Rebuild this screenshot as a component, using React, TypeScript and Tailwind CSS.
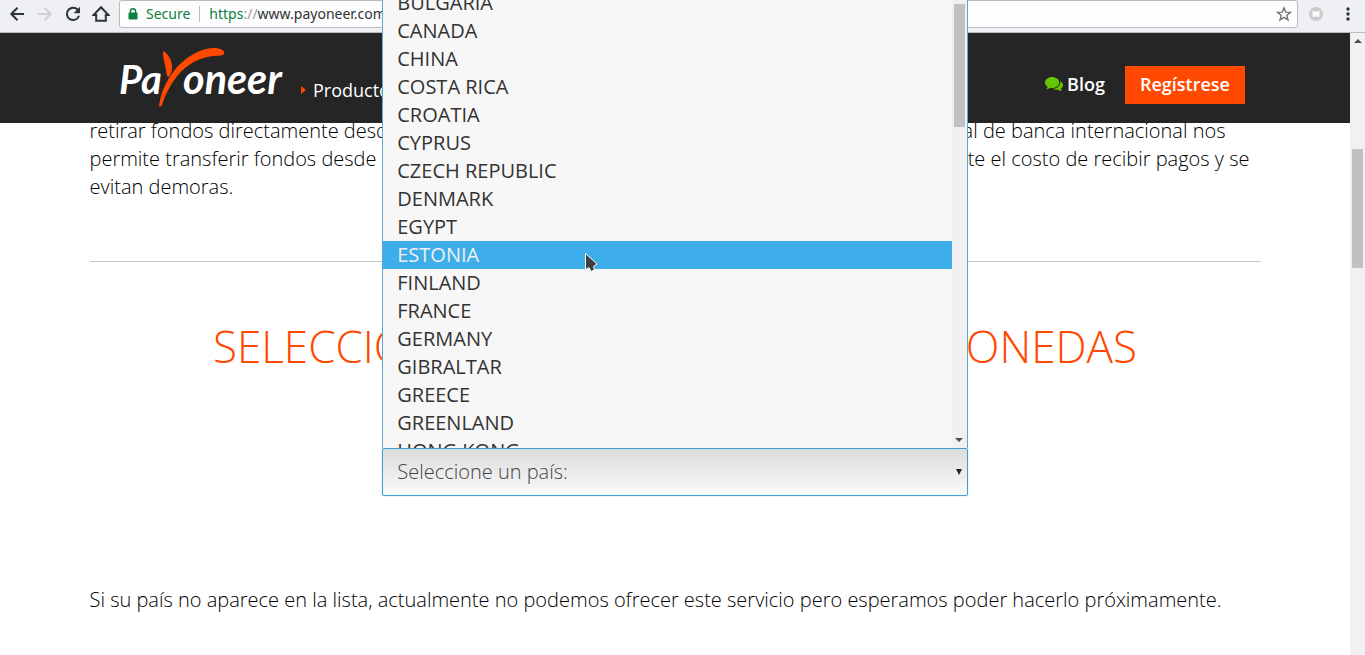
import type { ReactNode } from 'react';

const countries = [
  'BULGARIA', 'CANADA', 'CHINA', 'COSTA RICA', 'CROATIA', 'CYPRUS', 'CZECH REPUBLIC', 'DENMARK', 'EGYPT',
  'ESTONIA', 'FINLAND', 'FRANCE', 'GERMANY', 'GIBRALTAR', 'GREECE', 'GREENLAND', 'HONG KONG',
];

function ToolButton({ label, children }: { label: string; children: ReactNode }) {
  return (
    <button type="button" aria-label={label} className="flex h-7 w-7 items-center justify-center">
      {children}
    </button>
  );
}

function Toolbar() {
  return (
    <div className="flex h-[33px] items-start border-b border-[#b9bbbf] bg-[#eef0f3] pl-[3px] font-['Noto_Sans',sans-serif] text-sm">
      <div className="flex">
        <ToolButton label="Back">
          <svg width="16" height="16" viewBox="0 0 16 16" fill="none" stroke="#2e3338" strokeWidth="2">
            <path d="M15 8H2.5M8.5 1.8 2.3 8l6.2 6.2" />
          </svg>
        </ToolButton>
        <ToolButton label="Forward">
          <svg width="16" height="16" viewBox="0 0 16 16" fill="none" stroke="#cfd0d2" strokeWidth="2">
            <path d="M1 8h12.5M7.5 1.8 13.7 8l-6.2 6.2" />
          </svg>
        </ToolButton>
        <ToolButton label="Reload">
          <svg width="16" height="16" viewBox="0 0 16 16" fill="none" stroke="#2e3338" strokeWidth="2">
            <path d="M13.4 4.6A6.2 6.2 0 1 0 14 9.8" />
            <path d="M15 .8v6.4H8.6z" fill="#2e3338" stroke="none" />
          </svg>
        </ToolButton>
        <ToolButton label="Home">
          <svg width="18" height="18" viewBox="0 0 18 18" fill="none" stroke="#2e3338" strokeWidth="2">
            <path d="M1.600 10 9 2.300l7.400 7.700h-2.600v5.800H4.200V10z" />
          </svg>
        </ToolButton>
      </div>
      <div className="ml-1 flex h-7 flex-1 items-center rounded-[3px] border border-[#b9bbbf] bg-[#fdfdfd] pr-[5px] pl-2">
        <svg width="10" height="12" viewBox="0 0 10 12" className="mr-2">
          <path d="M2.4 5V3.4a2.6 2.6 0 0 1 5.2 0V5" fill="none" stroke="#0b8043" strokeWidth="1.4" />
          <rect x="0.5" y="4.6" width="9" height="6.8" rx="1" fill="#0b8043" />
        </svg>
        <span className="text-[#0b8043]">Secure</span>
        <span className="mx-[9px] h-4 w-px bg-[#bdbdbd]" />
        <div role="textbox" aria-label="Address" className="flex-1 text-[#2e3338]">
          <span className="text-[#0b8043]">https</span>
          <span className="text-[#9a9a9a]">://</span>www.payoneer.com
        </div>
        <button type="button" aria-label="Bookmark this page">
          <svg width="16" height="16" viewBox="0 0 16 16" fill="none" stroke="#70757a" strokeWidth="1.4">
            <path d="m8 1.8 1.7 4.3 4.7.3-3.6 3 1.2 4.5L8 11.4l-4 2.5 1.2-4.5-3.6-3 4.7-.3z" />
          </svg>
        </button>
      </div>
      <button type="button" aria-label="Extension" className="mx-[11px] flex h-7 items-center">
        <svg width="14" height="14" viewBox="0 0 14 14">
          <circle cx="7" cy="7" r="7" fill="#cbcbcb" />
          <path d="M3.500 3.800 5.500 4 7 5l1.500-1 2-.2V10.200l-2-.2L7 9.200l-1.500.8-2 .2z" fill="#fafafa" />
        </svg>
      </button>
      <button type="button" aria-label="Menu" className="mr-[3px] flex h-7 w-7 items-center justify-center">
        <svg width="4" height="14" viewBox="0 0 4 14" fill="#2e3338">
          <circle cx="2" cy="2" r="1.7" />
          <circle cx="2" cy="7" r="1.7" />
          <circle cx="2" cy="12" r="1.7" />
        </svg>
      </button>
    </div>
  );
}

function Logo() {
  return (
    <svg width="164" height="60" viewBox="90 54 492 180" role="img" aria-label="Payoneer">
      <g fill="#fff" fontFamily="Lato, sans-serif" fontStyle="italic" fontWeight="700">
        <text x="87" y="192" fontSize="120">Pa</text>
        <text x="279" y="192" fontSize="124">oneer</text>
      </g>
      <g fill="#ff4800">
        <path d="M219 62c14 8 25 25 27 44 1 14-2 26-9 34-5 1-6-2-7-8-2-24-12-44-11-70z" />
        <path d="M207 229c4-33 17-68 40-100 33-45 82-75 124-75 19 0 32 7 32 14 0 6-7 9-17 9-38-1-79 15-111 46-27 27-47 66-58 98-3 9-8 11-10 8z" />
      </g>
    </svg>
  );
}

function Header() {
  return (
    <header className="relative z-10 h-[90px] bg-[#252525] px-[105px] font-['Open_Sans',sans-serif] text-white">
      <div className="flex h-full items-start justify-between pl-[15px]">
        <div className="flex pt-[15px]">
          <a href="#inicio">
            <Logo />
          </a>
          <a href="#productos" className="mt-7 ml-[17px] flex h-7 items-center gap-[7px] text-lg">
            <svg width="5" height="8" viewBox="0 0 5 8" fill="#ff4800">
              <path d="M0 0l5 4-5 4z" />
            </svg>
            Productos
          </a>
        </div>
        <div className="flex items-start gap-5 pt-[33px] text-lg leading-9 font-semibold">
          <a href="#blog" className="flex items-center gap-1">
            <svg width="18" height="15" viewBox="0 0 18 15" fill="#66c400">
              <path d="M7.2 0C11.2 0 14.3 2.5 14.3 5.5S11.2 11 7.2 11c-.7 0-1.400-.1-2-.2-1 .8-2.300 1.300-3.900 1.400.7-.7 1.200-1.500 1.300-2.400C1 8.800 0 7.300 0 5.500 0 2.500 3.200 0 7.200 0z" />
              <path d="M15.300 4.200c1.600.9 2.700 2.300 2.700 4 0 1.500-.9 2.900-2.300 3.800.2.800.7 1.500 1.400 2.100-1.600-.1-2.900-.6-3.900-1.400-1.900.4-4.100 0-5.600-.9 4.500 0 8.200-3.400 7.700-7.600z" />
            </svg>
            Blog
          </a>
          <a href="#registro" className="h-[38px] bg-[#ff4800] px-[15px]">
            Regístrese
          </a>
        </div>
      </div>
    </header>
  );
}

function CountryPicker() {
  return (
    <div className="relative z-20 mx-auto mt-[72px] w-1/2">
      <div className="absolute bottom-full left-0 flex h-[459px] w-full overflow-hidden border-x border-[#5ba8d3] bg-[#f7f7f7] text-xl font-normal text-[#333]">
        <ul role="listbox" aria-label="Países" className="flex-1">
          {countries.map((name) => (
            <li
              key={name}
              role="option"
              aria-selected={name === 'ESTONIA'}
              className={name === 'ESTONIA' ? 'bg-[#3daee9] px-[14px] leading-7 text-[#eff0f1]' : 'px-[14px] leading-7'}
            >
              {name}
            </li>
          ))}
        </ul>
        <div className="flex w-[15px] flex-col items-center justify-between bg-[#f0f0f0] pt-[15px] pb-[6px]">
          <div className="h-[123px] w-[11px] bg-[#c1c1c1]" />
          <svg width="8" height="4" viewBox="0 0 8 4" fill="#505050">
            <path d="M0 0h8L4 4z" />
          </svg>
        </div>
        <svg width="14" height="21" viewBox="0 0 14 21" className="absolute top-[263px] left-[201px]">
          <path d="M1.500 1.500v16l3.500-2 2 4 3.500-1.500-1-3.500 3.500-2.500z" fill="#3f3f3f" stroke="#fff" strokeWidth="1" />
        </svg>
      </div>
      <label htmlFor="country" className="sr-only">
        Seleccione un país
      </label>
      <select
        id="country"
        className="block h-12 w-full appearance-none rounded-[2px] border border-[#3d9fd0] bg-linear-to-b from-[#dcdcdc] to-[#fafafa] px-[14px] text-xl font-light text-[#444] shadow-[0_0_1px_#3daee9]"
      >
        <option>Seleccione un país:</option>
      </select>
      <svg width="6" height="6" viewBox="0 0 6 6" fill="#222" className="pointer-events-none absolute right-[6px] bottom-[21px]">
        <path d="M0 0h6L3 6z" />
      </svg>
    </div>
  );
}

export default function App() {
  return (
    <div className="flex h-screen flex-col overflow-hidden bg-white">
      <Toolbar />
      <div className="flex min-h-0 flex-1">
        <div className="min-w-0 flex-1">
          <Header />
          <main className="mx-auto -mt-[6px] max-w-[1171px] font-['Open_Sans',sans-serif] text-xl leading-7 font-light text-black">
            <div className="whitespace-nowrap">
              <p className="flex max-w-[1136px] justify-between">
                <span>retirar fondos directamente desde</span>
                <span>red mundial de banca internacional nos</span>
              </p>
              <p className="flex max-w-[1160px] justify-between">
                <span>permite transferir fondos desde</span>
                <span>notablemente el costo de recibir pagos y se</span>
              </p>
              <p>evitan demoras.</p>
            </div>
            <hr className="mt-[60px] border-t border-[#c8c8c8]" />
            <h1 className="mx-auto mt-[54px] flex max-w-[924px] justify-between text-[44px] leading-[60px] whitespace-nowrap text-[#ff4800]">
              <span>SELECCIONE</span>
              <span>MONEDAS</span>
            </h1>
            <CountryPicker />
            <p className="mt-[90px] whitespace-nowrap">
              Si su país no aparece en la lista, actualmente no podemos ofrecer este servicio pero esperamos poder hacerlo próximamente.
            </p>
          </main>
        </div>
        <div className="flex w-[15px] flex-col items-center bg-[#f1f1f1] pt-[6px]">
          <svg width="8" height="4" viewBox="0 0 8 4" fill="#505050">
            <path d="M0 4h8L4 0z" />
          </svg>
          <div className="mt-[106px] h-[119px] w-[11px] bg-[#c1c1c1]" />
        </div>
      </div>
    </div>
  );
}
